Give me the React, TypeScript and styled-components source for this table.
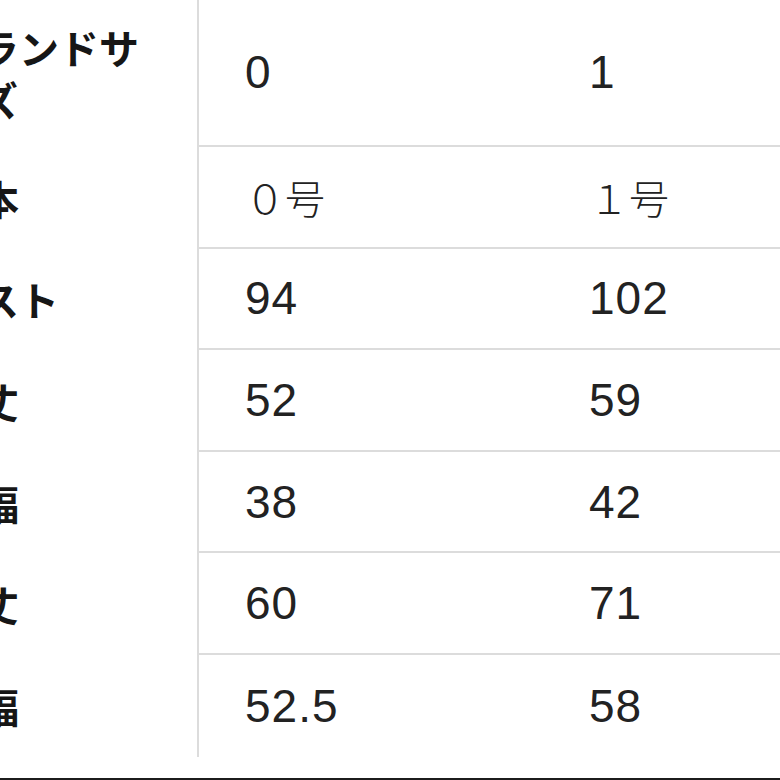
import { createGlobalStyle, styled } from "styled-components";

interface RowType {
	label: string;
	first: string;
	second: string;
}

const Rows: RowType[] = [
	{ label: "ブランドサイズ", first: "0", second: "1" },
	{ label: "日本", first: "０号", second: "１号" },
	{ label: "バスト", first: "94", second: "102" },
	{ label: "着丈", first: "52", second: "59" },
	{ label: "肩幅", first: "38", second: "42" },
	{ label: "袖丈", first: "60", second: "71" },
	{ label: "身幅", first: "52.5", second: "58" },
];

const isWide = (text: string) => /[０-９号]/.test(text);

const App = () => {
	return (
		<>
			<GlobalStyle />
			<Page>
				<SizeTable>
					{Rows.map((row, i) => (
						<TableRow key={row.label} $first={i === 0}>
							<LabelCell>{row.label}</LabelCell>
							<ValueCell $last={i === Rows.length - 1} $wide={isWide(row.first)}>
								{row.first}
							</ValueCell>
							<ValueCell $last={i === Rows.length - 1} $wide={isWide(row.second)}>
								{row.second}
							</ValueCell>
						</TableRow>
					))}
				</SizeTable>
				<BottomRule />
			</Page>
		</>
	);
};
export default App;

const GlobalStyle = createGlobalStyle`
	html, body {
		margin: 0;
		padding: 0;
		background: #ffffff;
	}
`;

const Page = styled.div`
	width: 780px;
	height: 780px;
	display: flex;
	flex-direction: column;
	overflow: hidden;
	background: #ffffff;
	color: #161616;
`;

const SizeTable = styled.div`
	display: flex;
	flex-direction: column;
	margin: -2px 0 0 -76px;
`;

const TableRow = styled.div<{ $first: boolean }>`
	display: grid;
	grid-template-columns: 275px 344px 1fr;
	height: ${(p) => (p.$first ? "149px" : "101.6px")};
`;

const LabelCell = styled.div`
	display: flex;
	align-items: center;
	padding: 0 40px 0 15px;
	border-right: 2px solid #dcdcdc;
	font-family: "Noto Sans CJK JP", sans-serif;
	font-weight: 700;
	font-size: 40px;
	line-height: 52px;
	box-sizing: border-box;
`;

const ValueCell = styled.div<{ $last: boolean; $wide: boolean }>`
	display: flex;
	align-items: center;
	padding-left: 46px;
	border-bottom: ${(p) => (p.$last ? "none" : "2px solid #dcdcdc")};
	font-family: ${(p) => (p.$wide ? '"Noto Sans CJK JP", sans-serif' : '"Liberation Sans", Arial, sans-serif')};
	font-size: ${(p) => (p.$wide ? "40px" : "46px")};
	letter-spacing: ${(p) => (p.$wide ? "0" : "1px")};
	font-weight: ${(p) => (p.$wide ? 300 : 400)};
	color: #222222;
`;

const BottomRule = styled.div`
	margin-top: auto;
	height: 2px;
	background: #1c1c1c;
`;
